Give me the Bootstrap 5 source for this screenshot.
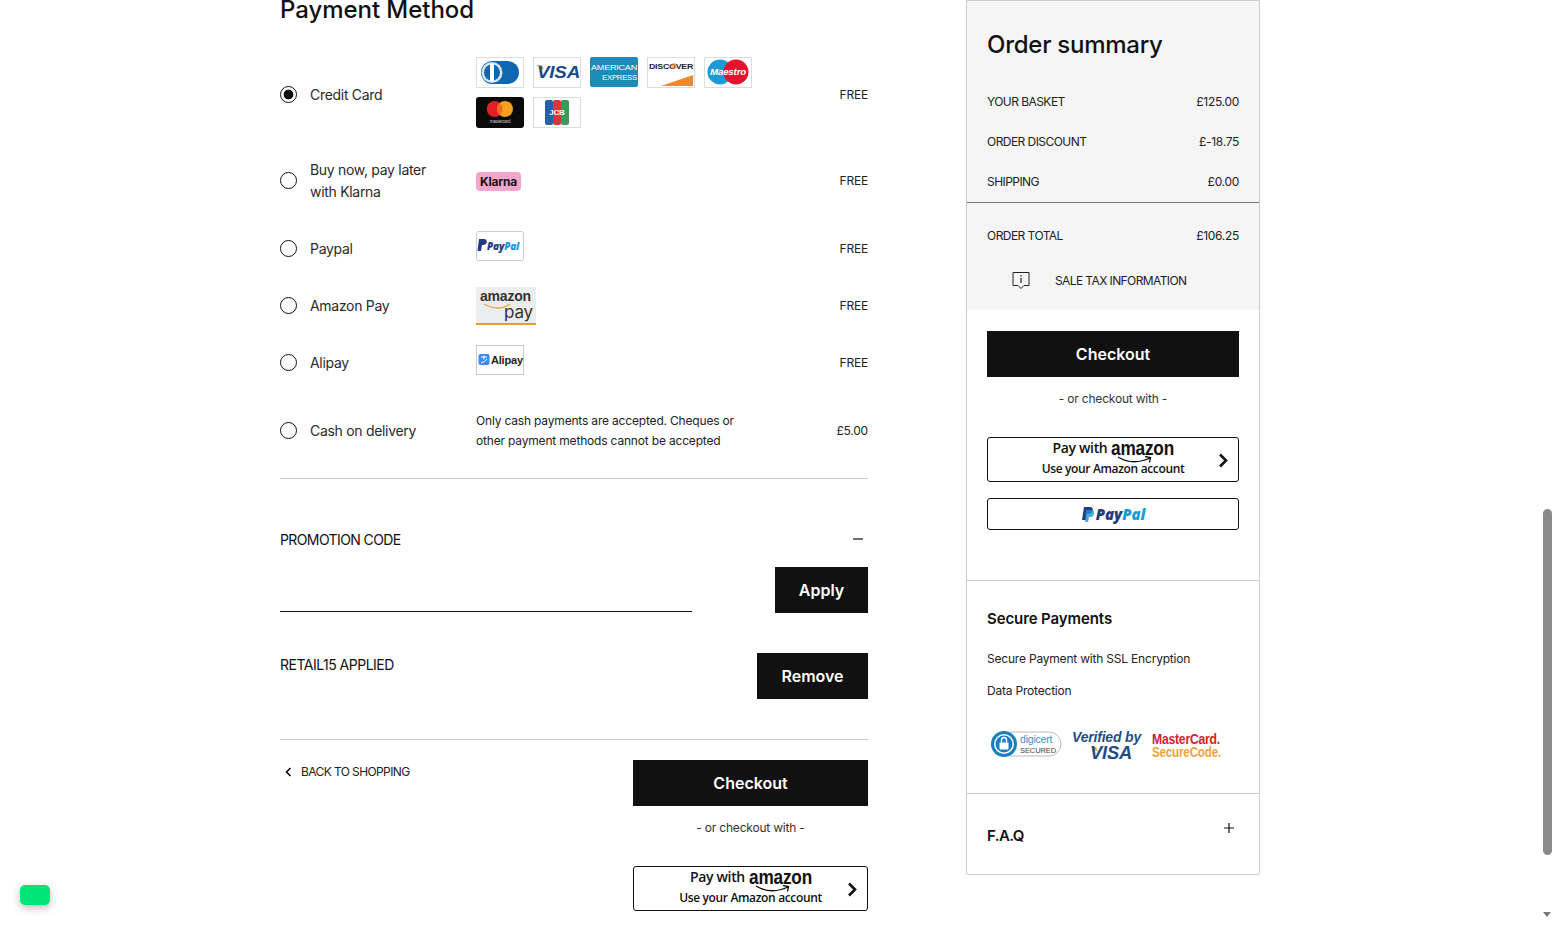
<!DOCTYPE html>
<html lang="en">
<head>
<meta charset="utf-8">
<title>Checkout</title>
<link href="https://cdn.jsdelivr.net/npm/bootstrap@5.3.0/dist/css/bootstrap.min.css" rel="stylesheet">
<style>
html,body{height:925px;overflow:hidden}
body{font-family:"Inter","Noto Sans",sans-serif;color:#111;background:#fff;padding-right:15px;font-size:14px;letter-spacing:-.2px}
.shell{width:980px}
.left-col{width:588px}
.right-col{width:294px;height:875px;border:1px solid #ccc;border-radius:0 0 2px 2px}
.pay-title{font-size:24px;line-height:29px;font-weight:500;margin:-5px 0 28px;letter-spacing:-.05px}
.pay-row{display:flex;align-items:center}
.h86{height:86px}.h46{height:46px}.h68{height:68px}.h90{height:90px}
.row-gap{margin-top:2px}
.pay-label{width:196px;display:flex;align-items:center;line-height:22px;font-size:14px;color:#2a2a2a;letter-spacing:-.3px}
.pay-label .form-check-input{width:17px;height:17px;margin:-2px 13px 0 0;border:1px solid #111;flex:none}
.form-check-input:checked{background-color:#fff;border-color:#111;background-image:radial-gradient(circle,#111 0,#111 4.6px,transparent 5.2px)}
.pay-icons{width:285px;display:flex;flex-wrap:wrap;gap:9px}
.pay-icons svg{display:block}
.cards-shift{margin-bottom:6px}
.icon-up{margin-top:-7px}
.pay-price{margin-left:auto;font-size:12px;color:#222}
.pay-note{font-size:12px;line-height:20px;color:#222;width:285px;letter-spacing:-.18px}
.soft-line{border-top:1px solid #ccc}
.hr-gap{margin-top:2px}
.blk-btn{background:#111;color:#fff;border:0;border-radius:0;height:46px;font-size:16px;font-weight:600;display:flex;align-items:center;justify-content:center;padding:0}
.blk-btn:hover{background:#111;color:#fff}
.promo-head{margin-top:45px;height:26px;padding-top:4px;font-size:14px;letter-spacing:-.6px}
.promo-form{height:86px;margin-top:17px}
.promo-input{width:412px;height:45px;border:0;border-bottom:1px solid #111;background:transparent}
.apply-btn{width:93px}
.remove-btn{width:111px}
.retail-row{height:86px}
.retail-txt{line-height:24px;letter-spacing:-.5px}
.upper{text-transform:uppercase}
.alt-text{font-size:12px;text-align:center;color:#333;height:60px;padding-top:12px;line-height:20px}
.wallet{display:flex;align-items:center;justify-content:center;position:relative;background:#fff;border:1px solid #111;border-radius:3px;color:#111}
.amz{height:45px;flex-direction:column;justify-content:flex-start;padding-top:2px;font-family:"Open Sans",sans-serif;font-weight:600;letter-spacing:-.35px}
.amz-top{font-size:14px;line-height:16px;height:20px;display:flex;gap:4px}
.amz-word{display:block;width:62px;position:relative;height:16px}
.amz-letters{display:block;font-family:"Liberation Sans",sans-serif;font-weight:700;font-size:20px;letter-spacing:-.2px;line-height:16px;transform:scaleX(.86);transform-origin:0 50%}
.amz-sub{font-size:12px;line-height:14px;margin-top:2px}
.amz-smile{position:absolute;left:6px;top:16px}
.amz-arrow{position:absolute;right:10px;top:15px}
.pp{height:32px;font-family:"Open Sans",sans-serif;font-style:italic;font-weight:800;font-size:15px;gap:2px;letter-spacing:-.1px}
.pp b{color:#253b80;font-weight:800}.pp i{color:#179bd7}
.summary-top{background:#f5f5f5;height:309px}
.sum-title{font-size:24px;font-weight:500;line-height:29px;padding:29px 20px 0;height:81px;letter-spacing:-.25px}
.sum-row{display:flex;justify-content:space-between;height:40px;align-items:center;padding:0 20px;font-size:12px;color:#222;letter-spacing:-.55px}
.sum-row span:last-child{letter-spacing:-.3px}
.sum-line{border-top:1px solid #777;height:14px}
.tax-row{display:flex;align-items:center;padding:15px 0 0 45px;font-size:12px;letter-spacing:-.6px;color:#222}
.tax-row svg{margin-right:25px}
.cta-block{padding:21px 20px 0;height:270px}
.sec-block{height:213px;padding:28px 20px 0}
.sec-title,.faq-title{font-size:15px;font-weight:600;line-height:20px;letter-spacing:-.1px}
.faq-title{letter-spacing:-.6px}
.sec-line{font-size:12px;line-height:20px;color:#222;margin-top:12px;letter-spacing:-.2px}
.sec-title + .sec-line{margin-top:20px}
.sec-logos{display:block;margin-top:26px}
.faq-row{height:81px;padding:32px 20px 0;display:flex;justify-content:space-between;align-items:flex-start}
.plus-icon{margin:-4px 4px 0 0}
.foot-row{padding-top:20px}
.back-link{font-size:12px;color:#222;text-decoration:none;letter-spacing:-.6px;display:flex;align-items:center;gap:9px;padding:3px 0 0 5px}
.side-cta{width:235px}
.fake-scroll{position:fixed;top:0;right:0;width:15px;height:925px;background:#fff}
.fake-thumb{position:absolute;left:3px;top:509px;width:9px;height:346px;background:#8a8a8a;border-radius:5px}
.fake-down{position:absolute;left:3px;top:912px;width:0;height:0;border-left:4px solid transparent;border-right:4px solid transparent;border-top:5px solid #777}
.chat-pill{position:fixed;left:20px;top:885px;width:30px;height:20px;background:#00e676;border-radius:5px;box-shadow:0 3px 8px rgba(0,0,0,.25)}
</style>
</head>
<body>
<div class="shell mx-auto d-flex justify-content-between align-items-start">
  <main class="left-col">
    <h2 class="pay-title">Payment Method</h2>

    <div class="pay-row h86">
      <label class="pay-label"><input class="form-check-input" type="radio" name="pm" checked>Credit Card</label>
      <div class="pay-icons cards-shift">
        <svg width="48" height="31" viewBox="0 0 48 31"><rect x=".5" y=".5" width="47" height="30" fill="#fff" stroke="#ddd"/><rect x="5" y="4" width="38" height="23" rx="11.5" fill="#0f67b1"/><circle cx="16" cy="15.5" r="10.5" fill="#d7e3ef"/><circle cx="16" cy="15.5" r="8" fill="#0f67b1"/><rect x="14" y="7" width="4" height="17" fill="#fff"/></svg>
        <svg width="48" height="31" viewBox="0 0 48 31"><rect x=".5" y=".5" width="47" height="30" fill="#fff" stroke="#ddd"/><path d="M3 8h6l2 5z" fill="#e8a33b"/><text x="4" y="21" font-family="Liberation Sans" font-size="17" font-style="italic" font-weight="700" fill="#1a4a86" textLength="43" lengthAdjust="spacingAndGlyphs">VISA</text></svg>
        <svg width="48" height="31" viewBox="0 0 48 31"><rect width="48" height="30" rx="2" fill="#1f8ab5"/><text x="1" y="13" font-family="Liberation Sans" font-size="8" fill="#fff" textLength="46" lengthAdjust="spacingAndGlyphs">AMERICAN</text><text x="12" y="23" font-family="Liberation Sans" font-size="8" fill="#fff" textLength="35" lengthAdjust="spacingAndGlyphs">EXPRESS</text></svg>
        <svg width="48" height="31" viewBox="0 0 48 31"><rect x=".5" y=".5" width="47" height="30" fill="#fff" stroke="#ddd"/><path d="M14 29L46 18v11z" fill="#ec8a34"/><text x="2" y="12" font-family="Liberation Sans" font-size="7.500" font-weight="700" fill="#222" textLength="44" lengthAdjust="spacingAndGlyphs">DISCOVER</text><circle cx="27" cy="9" r="3" fill="#ec8a34" opacity=".6"/></svg>
        <svg width="48" height="31" viewBox="0 0 48 31"><rect x=".5" y=".5" width="47" height="30" fill="#fff" stroke="#ddd"/><circle cx="16" cy="15" r="12.5" fill="#1a9ad6"/><circle cx="32" cy="15" r="12.5" fill="#e8112d"/><text x="24" y="18" text-anchor="middle" font-family="Liberation Sans" font-size="9.500" font-style="italic" font-weight="700" fill="#fff" textLength="36" lengthAdjust="spacingAndGlyphs">Maestro</text></svg>
        <svg width="48" height="31" viewBox="0 0 48 31"><rect width="48" height="31" rx="3" fill="#0a0a0a"/><circle cx="18.700" cy="12" r="8" fill="#e01f26"/><circle cx="29" cy="12" r="8" fill="#f6a01d"/><path d="M23.800 5.900a8 8 0 0 1 0 12.200a8 8 0 0 1 0-12.200z" fill="#f26a21"/><text x="24" y="26" text-anchor="middle" font-family="Liberation Sans" font-size="4.500" fill="#ccc">mastercard</text></svg>
        <svg width="48" height="31" viewBox="0 0 48 31"><rect x=".5" y=".5" width="47" height="30" fill="#fff" stroke="#ddd"/><rect x="12" y="3" width="8" height="25" rx="2" fill="#2560a8"/><rect x="20" y="3" width="8" height="25" rx="2" fill="#d2383d"/><rect x="28" y="3" width="8" height="25" rx="2" fill="#3b9a57"/><text x="24" y="18" text-anchor="middle" font-family="Liberation Sans" font-size="8" font-weight="700" fill="#fff">JCB</text></svg>
      </div>
      <div class="pay-price">FREE</div>
    </div>

    <div class="pay-row h86">
      <label class="pay-label"><input class="form-check-input" type="radio" name="pm"><span>Buy now, pay later<br>with Klarna</span></label>
      <div class="pay-icons">
        <svg width="45" height="19" viewBox="0 0 45 19"><rect width="45" height="19" rx="4" fill="#f4a6cf"/><text x="22.500" y="14" text-anchor="middle" font-family="Inter" font-size="12" font-weight="700" fill="#17120f">Klarna</text></svg>
      </div>
      <div class="pay-price">FREE</div>
    </div>

    <div class="pay-row h46 row-gap">
      <label class="pay-label"><input class="form-check-input" type="radio" name="pm">Paypal</label>
      <div class="pay-icons">
        <svg class="icon-up" width="48" height="30" viewBox="0 0 48 30"><rect x=".5" y=".5" width="47" height="29" rx="2" fill="#fff" stroke="#ccc"/><path d="M3 8h5c4 0 4 6-1 6H6l-1 6H1.500z" fill="#253b80"/><text x="11" y="19" font-family="Open Sans" font-size="10" font-style="italic" font-weight="800" fill="#253b80">Pay<tspan fill="#179bd7">Pal</tspan></text></svg>
      </div>
      <div class="pay-price">FREE</div>
    </div>

    <div class="pay-row h68">
      <label class="pay-label"><input class="form-check-input" type="radio" name="pm">Amazon Pay</label>
      <div class="pay-icons">
        <svg width="60" height="38" viewBox="0 0 60 38"><rect width="60" height="36" fill="#ebedee"/><rect y="36" width="60" height="2" fill="#eb9a2f"/><text x="4" y="14" font-family="Liberation Sans" font-size="14" font-weight="700" fill="#333">amazon</text><path d="M8 17q14 8 26 0" stroke="#e8a33b" stroke-width="1.300" fill="none"/><text x="28" y="31" font-family="Inter" font-size="17" fill="#333">pay</text></svg>
      </div>
      <div class="pay-price">FREE</div>
    </div>

    <div class="pay-row h46">
      <label class="pay-label"><input class="form-check-input" type="radio" name="pm">Alipay</label>
      <div class="pay-icons">
        <svg class="icon-up" width="48" height="30" viewBox="0 0 48 30"><rect x=".5" y=".5" width="47" height="29" fill="#fff" stroke="#ccc"/><rect x="2.500" y="9" width="11" height="11" rx="2" fill="#3d8bf0"/><path d="M5 12h6M8 10.500v4M5 18q4-1 6-4" stroke="#fff" stroke-width="1" fill="none"/><text x="15" y="19" font-family="Liberation Sans" font-size="11" font-weight="700" fill="#222">Alipay</text></svg>
      </div>
      <div class="pay-price">FREE</div>
    </div>

    <div class="pay-row h90">
      <label class="pay-label"><input class="form-check-input" type="radio" name="pm">Cash on delivery</label>
      <div class="pay-note">Only cash payments are accepted. Cheques or<br>other payment methods cannot be accepted</div>
      <div class="pay-price">£5.00</div>
    </div>

    <div class="soft-line hr-gap"></div>

    <div class="promo-head upper d-flex justify-content-between align-items-center">
      <span>Promotion code</span>
      <svg class="me-1" width="12" height="12" viewBox="0 0 12 12"><path d="M1 6h10" stroke="#111" stroke-width="1.200"/></svg>
    </div>
    <div class="d-flex justify-content-between align-items-start promo-form">
      <input class="promo-input" type="text" aria-label="Promotion code">
      <button class="btn blk-btn apply-btn" type="button">Apply</button>
    </div>
    <div class="d-flex justify-content-between align-items-start retail-row">
      <span class="upper retail-txt">Retail15 applied</span>
      <button class="btn blk-btn remove-btn" type="button">Remove</button>
    </div>
    <div class="soft-line"></div>
    <div class="d-flex justify-content-between align-items-start foot-row">
      <a class="back-link upper" href="#"><svg width="7" height="10" viewBox="0 0 7 10"><path d="M5.500 1L1.500 5l4 4" stroke="#111" stroke-width="1.700" fill="none"/></svg>Back to shopping</a>
      <div class="side-cta">
        <button class="btn blk-btn w-100" type="button">Checkout</button>
        <div class="alt-text">- or checkout with -</div>
        <div class="wallet amz">
          <div class="amz-top"><span>Pay with</span><span class="amz-word"><span class="amz-letters">amazon</span><svg class="amz-smile" width="36" height="9" viewBox="0 0 36 9"><path d="M1 1q15 9 32 1M28 0.500l5.500 1-1 5" stroke="#111" stroke-width="1.300" fill="none"/></svg></span></div>
          <div class="amz-sub">Use your Amazon account</div>
          <svg class="amz-arrow" width="10" height="15" viewBox="0 0 10 15"><path d="M2 1.500l6 6-6 6" stroke="#111" stroke-width="2.600" fill="none"/></svg>
        </div>
      </div>
    </div>
  </main>

  <aside class="right-col">
    <div class="summary-top">
      <div class="sum-title">Order summary</div>
      <div class="sum-row upper"><span>Your basket</span><span>£125.00</span></div>
      <div class="sum-row upper"><span>Order discount</span><span>£-18.75</span></div>
      <div class="sum-row upper"><span>Shipping</span><span>£0.00</span></div>
      <div class="sum-line"></div>
      <div class="sum-row upper"><span>Order total</span><span>£106.25</span></div>
      <div class="tax-row upper">
        <svg width="18" height="20" viewBox="0 0 18 20"><path d="M1 1.500h16v13h-5l-3 3-3-3H1z" stroke="#222" fill="none"/><path d="M9 4v1.500M9 7v5" stroke="#222" stroke-width="1.200"/></svg>
        <span>Sale tax information</span>
      </div>
    </div>
    <div class="cta-block">
      <button class="btn blk-btn w-100" type="button">Checkout</button>
      <div class="alt-text">- or checkout with -</div>
      <div class="wallet amz">
        <div class="amz-top"><span>Pay with</span><span class="amz-word"><span class="amz-letters">amazon</span><svg class="amz-smile" width="36" height="9" viewBox="0 0 36 9"><path d="M1 1q15 9 32 1M28 0.500l5.500 1-1 5" stroke="#111" stroke-width="1.300" fill="none"/></svg></span></div>
        <div class="amz-sub">Use your Amazon account</div>
        <svg class="amz-arrow" width="10" height="15" viewBox="0 0 10 15"><path d="M2 1.500l6 6-6 6" stroke="#111" stroke-width="2.600" fill="none"/></svg>
      </div>
      <div class="wallet pp mt-3">
        <svg width="13" height="15" viewBox="0 0 13 15"><path d="M3 0h6c4 0 4 6-1 7H6l-1 6H1z" fill="#253b80"/><path d="M5 3h6c3 0 3 6-1 7H8l-1 5H4z" fill="#179bd7" opacity=".8"/></svg>
        <span><b>Pay</b><i>Pal</i></span>
      </div>
    </div>
    <div class="soft-line sec-block">
      <div class="sec-title">Secure Payments</div>
      <div class="sec-line">Secure Payment with SSL Encryption</div>
      <div class="sec-line">Data Protection</div>
      <svg class="sec-logos" width="252" height="36" viewBox="0 0 252 36">
        <rect x="12" y="5" width="62" height="24" rx="12" fill="#fff" stroke="#bbb"/>
        <circle cx="17" cy="17" r="13" fill="#1a7fc1"/><circle cx="17" cy="17" r="10" fill="#fff"/><circle cx="17" cy="17" r="8.500" fill="#1a7fc1"/>
        <rect x="12.500" y="15.500" width="9" height="7" rx="1" fill="#fff"/><path d="M14.500 15.500v-2.500a2.500 2.500 0 0 1 5 0v2.500" stroke="#fff" stroke-width="1.400" fill="none"/>
        <text x="33" y="16" font-family="Liberation Sans" font-size="10.500" fill="#3d8fc6">digicert</text>
        <text x="33" y="26" font-family="Liberation Sans" font-size="7.500" fill="#444" textLength="36">SECURED</text>
        <text x="85" y="15" font-family="Liberation Sans" font-size="14.500" font-style="italic" font-weight="700" fill="#1f4d86" textLength="69" lengthAdjust="spacingAndGlyphs">Verified by</text>
        <path d="M104 20h5l2 5z" fill="#e8a33b"/>
        <text x="103" y="32" font-family="Liberation Sans" font-size="18" font-style="italic" font-weight="700" fill="#1f4d86" textLength="42" lengthAdjust="spacingAndGlyphs">VISA</text>
        <text x="165" y="17" font-family="Liberation Sans" font-size="14" font-weight="700" fill="#d3202f" textLength="68" lengthAdjust="spacingAndGlyphs">MasterCard.</text>
        <text x="165" y="30" font-family="Liberation Sans" font-size="14" font-weight="700" fill="#f2a33a" textLength="69" lengthAdjust="spacingAndGlyphs">SecureCode.</text>
      </svg>
    </div>
    <div class="soft-line faq-row">
      <div class="faq-title">F.A.Q</div>
      <svg class="plus-icon" width="12" height="12" viewBox="0 0 12 12"><path d="M6 1v10M1 6h10" stroke="#111" stroke-width="1.200"/></svg>
    </div>
  </aside>
</div>

<div class="fake-scroll"><div class="fake-thumb"></div><div class="fake-down"></div></div>
<div class="chat-pill"></div>
</body>
</html>
